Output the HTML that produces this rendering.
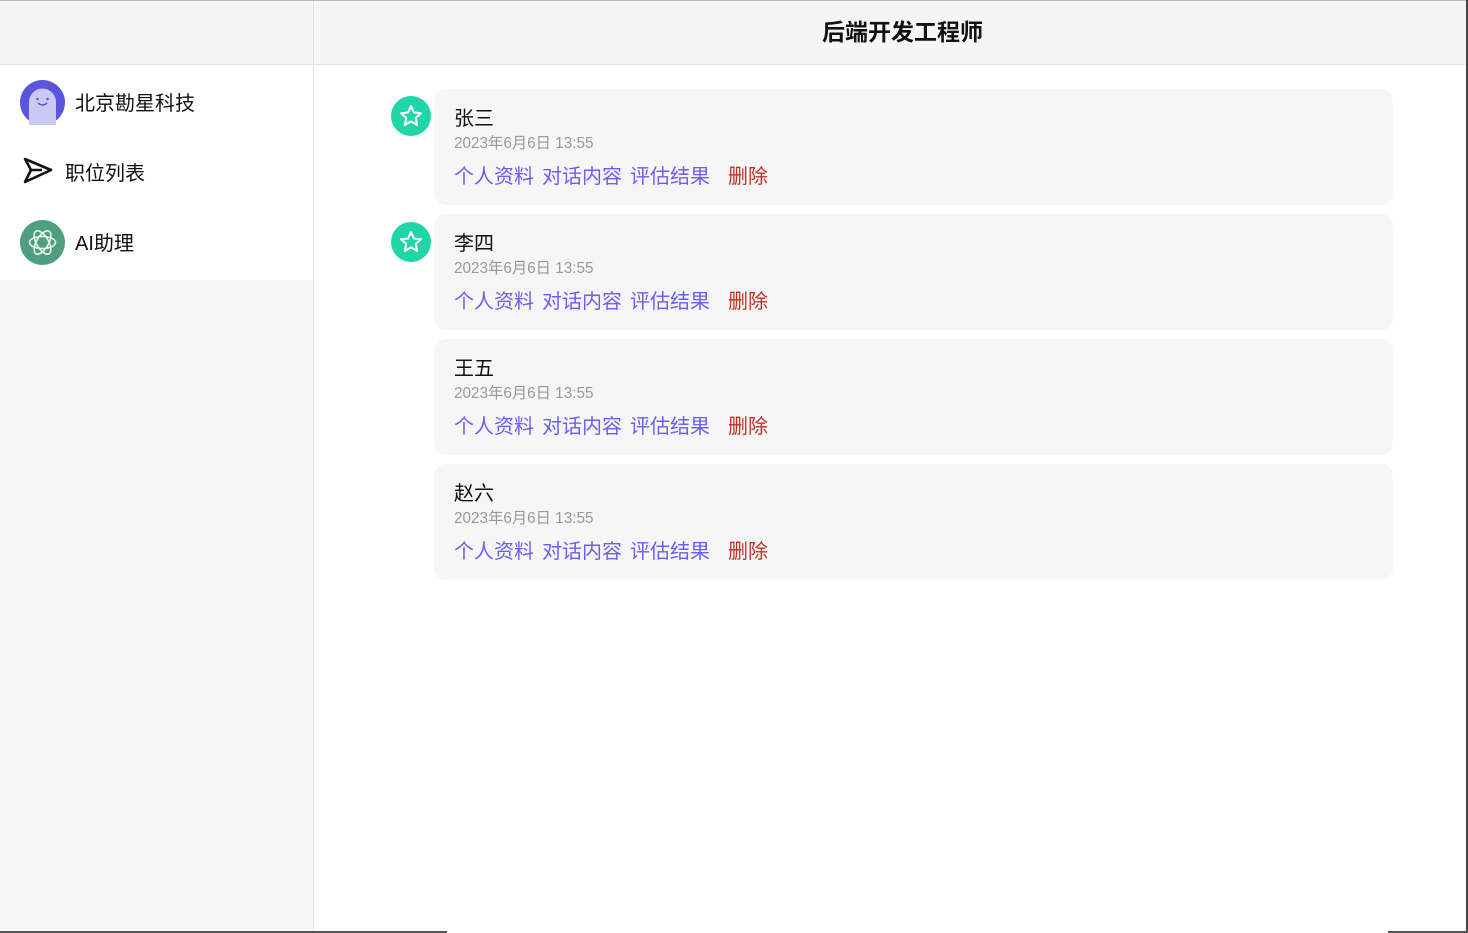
<!DOCTYPE html>
<html><head><meta charset="utf-8"><style>
*{margin:0;padding:0;box-sizing:border-box}
body{width:1468px;height:933px;overflow:hidden;background:#fff;font-family:"Liberation Sans","Noto Sans CJK SC",sans-serif;position:relative}
.top{position:absolute;left:0;top:0;width:1468px;height:1px;background:#bbb}
.hdr{position:absolute;left:0;top:1px;width:1466px;height:64px;background:#f5f5f5;border-bottom:1px solid #e4e4e4}
.hdr .t{position:absolute;left:822px;top:0;height:63px;line-height:63px;font-size:23px;font-weight:bold;color:#111;white-space:nowrap}
.vl{position:absolute;left:313px;top:1px;width:1px;height:932px;background:#e4e4e4}
.side{position:absolute;left:0;top:65px;width:313px;height:868px;background:#f6f6f6}
.sw{position:absolute;left:0;top:0;width:313px;height:215px;background:#fff}
.it{position:absolute;left:20px;display:flex;align-items:center;font-size:20px;color:#111}
.card{position:absolute;left:434px;width:959px;height:116px;background:#f6f6f6;border-radius:12px}
.nm{position:absolute;left:20px;top:13px;font-size:20px;color:#111}
.dt{position:absolute;left:20px;top:42px;font-size:15.3px;color:#999}
.ln{position:absolute;left:20px;top:71px;font-size:20px;color:#6b5ff0;white-space:nowrap}
.ln span{margin-right:8px}
.ln .del{color:#c0302a;margin-left:10px}
.star{position:absolute;left:391px;width:40px;height:40px;border-radius:50%;background:#1fd6a8}
.rb{position:absolute;left:1466px;top:0;width:2px;height:933px;background:#444}
.bb{position:absolute;top:931px;height:2px;background:#555}
</style></head><body>
<div class="top"></div>
<div class="hdr"><div class="t">后端开发工程师</div></div>
<div class="side"><div class="sw">
 <div class="it" style="top:15px"><svg width="45" height="45" viewBox="0 0 45 45"><circle cx="22.5" cy="22.5" r="22.5" fill="#5b55dc"/><path d="M9 45 V22 a13.5 13.5 0 0 1 27 0 V45z" fill="#cbc8f4"/><circle cx="17.5" cy="19" r="1.3" fill="#5b55dc"/><circle cx="27.5" cy="19" r="1.3" fill="#5b55dc"/><path d="M18 23 q4.5 4 9 0" stroke="#5b55dc" stroke-width="1.5" fill="none"/></svg><span style="margin-left:10px;margin-top:-3px">北京勘星科技</span></div>
 <div class="it" style="top:90px;left:22px"><svg width="32" height="32" viewBox="0 0 32 32"><path d="M3 4 L29 15 L3 27 L9 15 Z M9 15 H20" stroke="#111" stroke-width="2.6" fill="none" stroke-linejoin="round"/></svg><span style="margin-left:11px">职位列表</span></div>
 <div class="it" style="top:155px"><svg width="45" height="45" viewBox="0 0 45 45"><circle cx="22.5" cy="22.5" r="22.5" fill="#4f9e82"/><g stroke="#e8f5ef" stroke-width="1.6" fill="none"><ellipse cx="22.5" cy="22.5" rx="13" ry="6" transform="rotate(0 22.5 22.5)"/><ellipse cx="22.5" cy="22.5" rx="13" ry="6" transform="rotate(60 22.5 22.5)"/><ellipse cx="22.5" cy="22.5" rx="13" ry="6" transform="rotate(120 22.5 22.5)"/></g></svg><span style="margin-left:10px;margin-top:-3px">AI助理</span></div>
</div></div>
<div class="vl"></div>

<div class="star" style="top:96px"><svg width="40" height="40" viewBox="0 0 40 40"><path d="M20 10 L22.9 16.5 L30 17.2 L24.7 21.9 L26.2 29 L20 25.4 L13.8 29 L15.3 21.9 L10 17.2 L17.1 16.5 Z" stroke="#fff" stroke-width="2" fill="none" stroke-linejoin="round"/></svg></div>
<div class="star" style="top:222px"><svg width="40" height="40" viewBox="0 0 40 40"><path d="M20 10 L22.9 16.5 L30 17.2 L24.7 21.9 L26.2 29 L20 25.4 L13.8 29 L15.3 21.9 L10 17.2 L17.1 16.5 Z" stroke="#fff" stroke-width="2" fill="none" stroke-linejoin="round"/></svg></div>

<div class="card" style="top:89px"><div class="nm">张三</div><div class="dt">2023年6月6日 13:55</div><div class="ln"><span>个人资料</span><span>对话内容</span><span>评估结果</span><span class="del">删除</span></div></div>
<div class="card" style="top:214px"><div class="nm">李四</div><div class="dt">2023年6月6日 13:55</div><div class="ln"><span>个人资料</span><span>对话内容</span><span>评估结果</span><span class="del">删除</span></div></div>
<div class="card" style="top:339px"><div class="nm">王五</div><div class="dt">2023年6月6日 13:55</div><div class="ln"><span>个人资料</span><span>对话内容</span><span>评估结果</span><span class="del">删除</span></div></div>
<div class="card" style="top:464px"><div class="nm">赵六</div><div class="dt">2023年6月6日 13:55</div><div class="ln"><span>个人资料</span><span>对话内容</span><span>评估结果</span><span class="del">删除</span></div></div>

<div class="rb"></div>
<div class="bb" style="left:0;width:447px"></div>
<div class="bb" style="left:1388px;width:80px"></div>
</body></html>
